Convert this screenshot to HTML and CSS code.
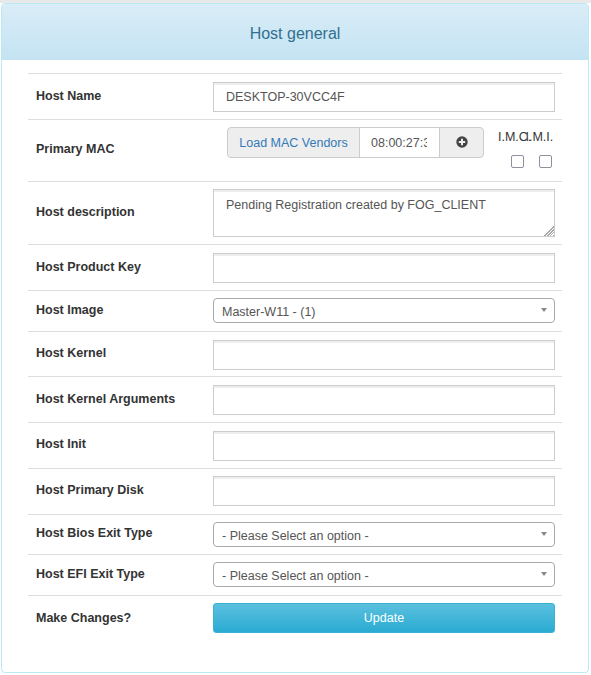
FILE: index.html
```html
<!DOCTYPE html>
<html lang="en">
<head>
    <meta charset="UTF-8">
    <meta name="viewport" content="width=device-width, initial-scale=1.0">
    <title>Host general</title>
    <link rel="stylesheet" href="styles.css">
</head>
<body>
    <div class="panel">
        <div class="panel-heading">Host general</div>
        <div class="panel-body">
            <div class="row">
                <label class="row-label">Host Name</label>
                <div class="row-field"><input class="text-input" type="text" value="DESKTOP-30VCC4F"></div>
            </div>
            <div class="row row-mac">
                <label class="row-label label-up">Primary MAC</label>
                <div class="row-field mac-field">
                    <div class="input-group">
                        <span class="addon addon-link">Load MAC Vendors</span>
                        <input class="mac-input" type="text" value="08:00:27:3E:5A:11">
                        <span class="addon addon-icon">
                            <svg width="12" height="12" viewBox="0 0 12 12"><circle cx="6" cy="6" r="5.7" fill="#444"/><path d="M2.8 6h6.4M6 2.8v6.4" stroke="#eee" stroke-width="2"/></svg>
                        </span>
                    </div>
                    <div class="mac-flag flag-first">
                        <span class="flag-name">I.M.C.</span>
                        <input class="flag-check" type="checkbox">
                    </div>
                    <div class="mac-flag flag-second">
                        <span class="flag-name">I.M.I.</span>
                        <input class="flag-check" type="checkbox">
                    </div>
                </div>
            </div>
            <div class="row row-area">
                <label class="row-label">Host description</label>
                <div class="row-field"><textarea class="text-area">Pending Registration created by FOG_CLIENT</textarea></div>
            </div>
            <div class="row">
                <label class="row-label">Host Product Key</label>
                <div class="row-field"><input class="text-input" type="text"></div>
            </div>
            <div class="row row-select">
                <label class="row-label">Host Image</label>
                <div class="row-field"><div class="select">Master-W11 - (1)</div></div>
            </div>
            <div class="row row-short">
                <label class="row-label label-up">Host Kernel</label>
                <div class="row-field"><input class="text-input" type="text"></div>
            </div>
            <div class="row">
                <label class="row-label">Host Kernel Arguments</label>
                <div class="row-field"><input class="text-input" type="text"></div>
            </div>
            <div class="row">
                <label class="row-label label-up">Host Init</label>
                <div class="row-field"><input class="text-input" type="text"></div>
            </div>
            <div class="row row-raised">
                <label class="row-label">Host Primary Disk</label>
                <div class="row-field"><input class="text-input" type="text"></div>
            </div>
            <div class="row row-select-short">
                <label class="row-label">Host Bios Exit Type</label>
                <div class="row-field"><div class="select">- Please Select an option -</div></div>
            </div>
            <div class="row row-select">
                <label class="row-label">Host EFI Exit Type</label>
                <div class="row-field"><div class="select">- Please Select an option -</div></div>
            </div>
            <div class="row row-last">
                <label class="row-label">Make Changes?</label>
                <div class="row-field"><button class="update-btn">Update</button></div>
            </div>
        </div>
    </div>
</body>
</html>
```

FILE: styles.css
```css
html {
    background-color: #fff;
}
body {
    margin: 0;
    padding: 3px 2px 0 1px;
    font-family: "Liberation Sans", Arial, sans-serif;
    font-size: 12.5px;
    color: #555;
    background: linear-gradient(#e8e8e8, #e8e8e8) top / 100% 3px no-repeat;
}
.panel {
    background-color: #fff;
    border: 1px solid #bce8f1;
    border-radius: 4px;
    height: 670px;
    box-sizing: border-box;
}
.panel-heading {
    height: 56px;
    line-height: 59px;
    text-align: center;
    font-size: 16px;
    color: #31708f;
    background-image: linear-gradient(#d9edf7, #c4e3f3);
    border-radius: 3px 3px 0 0;
}
.panel-body {
    padding: 13px 26px 0;
}
.row {
    display: flex;
    align-items: center;
    border-top: 1px solid #ddd;
    padding: 8px 7px 7px 8px;
}
.row-area {
    padding-top: 7px;
}
.row-select {
    padding-top: 7px;
    padding-bottom: 8px;
}
.row-select-short {
    padding-top: 7px;
}
.row-short {
    padding-bottom: 6px;
}
.row-raised {
    padding-top: 7px;
    padding-bottom: 8px;
}
.row-last {
    padding-top: 7px;
}
.row-label {
    width: 177px;
    flex: none;
    font-weight: bold;
    color: #333;
    margin-top: -3px;
}
.row-label.label-up {
    margin-top: -5px;
}
.row-select .row-label, .row-last .row-label {
    margin-top: -1px;
}
.row-field {
    flex: 1;
    min-width: 0;
}
.text-input, .text-area {
    display: block;
    width: 100%;
    box-sizing: border-box;
    height: 30px;
    padding: 0 12px;
    font-family: inherit;
    font-size: 12.5px;
    color: #555;
    border: 1px solid #ccc;
    box-shadow: inset 0 2px 0 #eee;
    border-radius: 0;
    outline: none;
}
.text-area {
    height: 48px;
    padding: 8px 12px;
}
.text-area::-webkit-resizer {
    background:
        linear-gradient(135deg, #fff 62%, transparent 62%),
        repeating-linear-gradient(135deg, #aaa 0 1px, #fff 1px 2px);
}
.mac-field {
    display: flex;
    height: 47px;
    padding-left: 14px;
    margin-top: -1px;
}
.input-group {
    display: flex;
    height: 31px;
    box-sizing: border-box;
    border: 1px solid #ccc;
    border-radius: 4px;
    background-color: #eee;
    margin-right: 14px;
    flex: none;
}
.addon {
    display: flex;
    align-items: center;
    justify-content: center;
}
.addon-link {
    width: 131px;
    color: #337ab7;
}
.addon-icon {
    width: 43px;
    padding-bottom: 2px;
    box-sizing: border-box;
}
.mac-input {
    width: 81px;
    box-sizing: border-box;
    border: none;
    border-left: 1px solid #ccc;
    border-right: 1px solid #ccc;
    padding: 0 12px 0 11px;
    font-family: inherit;
    font-size: 12.5px;
    color: #555;
    outline: none;
}
.mac-flag {
    width: 28px;
    display: flex;
    flex-direction: column;
}
.flag-first {
    width: 26px;
}
.flag-name {
    white-space: nowrap;
    color: #333;
    line-height: 14px;
    margin-top: 3px;
}
.flag-second .flag-name {
    margin-left: 1.5px;
}
.flag-check {
    appearance: none;
    width: 13px;
    height: 13px;
    margin: 11px 0 0;
    align-self: flex-end;
    background-color: #fff;
    border: 1px solid #8f8f9d;
    border-radius: 2px;
}
.select {
    position: relative;
    height: 25px;
    box-sizing: border-box;
    line-height: 26px;
    padding-left: 8px;
    color: #555;
    border: 1px solid #aaa;
    border-radius: 4px;
}
.select::after {
    content: "";
    position: absolute;
    right: 7px;
    top: 9px;
    border-left: 3px solid transparent;
    border-right: 3px solid transparent;
    border-top: 4px solid #888;
}
.update-btn {
    display: block;
    width: 100%;
    height: 30px;
    border: 1px solid #39b3d7;
    border-radius: 3px;
    background-image: linear-gradient(#5bc0de, #2aabd2);
    color: #fff;
    font-family: inherit;
    font-size: 12.5px;
}
```
